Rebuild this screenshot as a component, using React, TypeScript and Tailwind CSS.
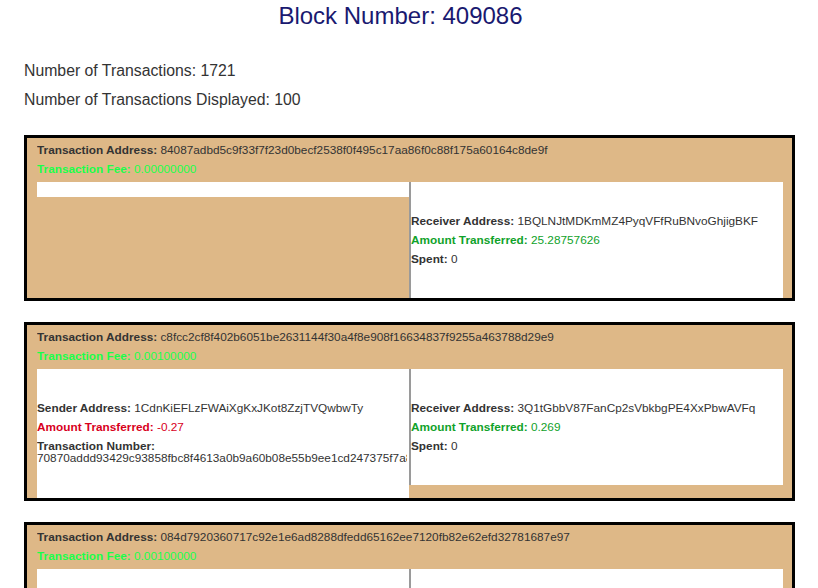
type Sender = { address: string; amount: string; txNumber: string };
type Receiver = { address: string; amount: string; spent: string };
type Tx = { address: string; fee: string; senders: Sender[]; receivers: Receiver[] };

const txs: Tx[] = [
    {
        address: "84087adbd5c9f33f7f23d0becf2538f0f495c17aa86f0c88f175a60164c8de9f",
        fee: "0.00000000",
        senders: [],
        receivers: [{ address: "1BQLNJtMDKmMZ4PyqVFfRuBNvoGhjigBKF", amount: "25.28757626", spent: "0" }],
    },
    {
        address: "c8fcc2cf8f402b6051be2631144f30a4f8e908f16634837f9255a463788d29e9",
        fee: "0.00100000",
        senders: [
            {
                address: "1CdnKiEFLzFWAiXgKxJKot8ZzjTVQwbwTy",
                amount: "-0.27",
                txNumber: "70870addd93429c93858fbc8f4613a0b9a60b08e55b9ee1cd247375f7a8e1c04",
            },
        ],
        receivers: [{ address: "3Q1tGbbV87FanCp2sVbkbgPE4XxPbwAVFq", amount: "0.269", spent: "0" }],
    },
    {
        address: "084d7920360717c92e1e6ad8288dfedd65162ee7120fb82e62efd32781687e97",
        fee: "0.00100000",
        senders: [
            {
                address: "1LgZTvoTJ6quJNCURmBUaJJkWWQZXkQnDn",
                amount: "-0.0511",
                txNumber: "5b8e1f07a4c2d9e36f1ab0c47d28e915fa3c6b02d7e49a81c5f3b60e2d7a94c1",
            },
        ],
        receivers: [{ address: "1Hz96kJKF2HLPGY15JWLB5m9qGNxvt8tHJ", amount: "0.0501", spent: "0" }],
    },
];

function Row({ label, value, color }: { label: string; value: string; color?: string }) {
    return (
        <div className={`h-[19px] leading-[19px] whitespace-nowrap overflow-hidden ${color ?? "text-[#333]"}`}>
            <span className="font-bold">{label}</span> {value}
        </div>
    );
}

function TxCard({ tx }: { tx: Tx }) {
    return (
        <div className="ml-[24px] w-[771px] border-[3px] border-black bg-[#deb887] pt-[3px] pl-[10px] pr-[9px] text-[11.8px]">
            <Row label="Transaction Address:" value={tx.address} />
            <Row label="Transaction Fee:" value={tx.fee} color="text-[#1aff4a]" />
            <div className="mt-[3px] flex items-start">
                <div className="w-[372px] flex-none bg-white overflow-hidden">
                    {tx.senders.length === 0 ? (
                        <div className="h-[15px]"></div>
                    ) : (
                        tx.senders.map((s, i) => (
                            <div key={i} className="pt-[30px] pb-[34px]">
                                <Row label="Sender Address:" value={s.address} />
                                <Row label="Amount Transferred:" value={s.amount} color="text-[#d8001c]" />
                                <div className="mt-[3px] leading-[12px] text-[#333] whitespace-nowrap overflow-hidden pr-[2px]">
                                    <div className="font-bold">Transaction Number:</div>
                                    <div className="overflow-hidden">{s.txNumber}</div>
                                </div>
                            </div>
                        ))
                    )}
                </div>
                <div className="flex-1 bg-white border-l-2 border-[#9a9a9a]">
                    {tx.receivers.map((r, i) => (
                        <div key={i} className="pt-[30px] pb-[29px]">
                            <Row label="Receiver Address:" value={r.address} />
                            <Row label="Amount Transferred:" value={r.amount} color="text-[#10a22a]" />
                            <Row label="Spent:" value={r.spent} />
                        </div>
                    ))}
                </div>
            </div>
        </div>
    );
}

export default function App() {
    return (
        <div className="bg-white min-h-screen pb-10" style={{ fontFamily: '"Liberation Sans", Arial, sans-serif' }}>
            <h1 className="pt-[2px] pr-[17px] text-center text-[24px] leading-[28px] text-[#191970] font-normal">
                Block Number: 409086
            </h1>

            <div className="mt-[32px] px-[24px] text-[15.8px] text-[#333] flex flex-col gap-[11px]">
                <p className="h-[18px] leading-[18px]">Number of Transactions: 1721</p>
                <p className="h-[18px] leading-[18px]">Number of Transactions Displayed: 100</p>
            </div>

            <div className="mt-[26px] flex flex-col gap-[21px]">
                {txs.map((tx, i) => (
                    <TxCard key={i} tx={tx} />
                ))}
            </div>
        </div>
    );
}
